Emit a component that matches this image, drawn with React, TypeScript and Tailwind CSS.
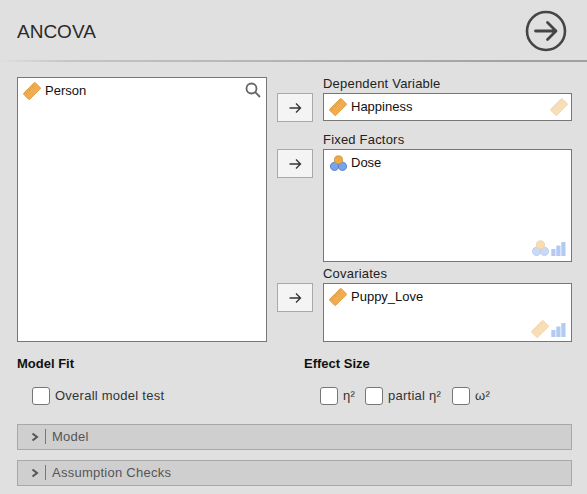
import React from "react";

function Ruler({ faded = false }: { faded?: boolean }) {
  return (
    <svg width="18" height="18" viewBox="0 0 18 18" className={faded ? "opacity-40" : ""}>
      <g transform="rotate(-45 9 9)">
        <rect x="0.800" y="4.700" width="16.400" height="8.600" rx="0.6" fill="#f0ad50" stroke="#dc9a3c" strokeWidth="0.8" />
        <path d="M3.200 5v2.700M5.500 5v1.600M7.800 5v2.700M10.100 5v1.600M12.400 5v2.700M14.700 5v1.600" stroke="#c78a34" strokeWidth="0.6" fill="none" />
      </g>
    </svg>
  );
}

function Nominal({ faded = false }: { faded?: boolean }) {
  return (
    <svg width="17" height="17" viewBox="0 0 18 18" className={faded ? "opacity-40" : ""}>
      <circle cx="4.800" cy="12" r="4.400" fill="#79a3ea" stroke="#3f6fca" strokeWidth="0.8" />
      <circle cx="13.200" cy="12" r="4.400" fill="#79a3ea" stroke="#3f6fca" strokeWidth="0.8" />
      <circle cx="9" cy="5.200" r="4.300" fill="#efa945" stroke="#c98a2e" strokeWidth="0.8" />
    </svg>
  );
}

function Bars() {
  return (
    <svg width="15" height="15" viewBox="0 0 15 15">
      <rect x="0.300" y="8" width="4.200" height="7" fill="#b3cbf2" />
      <rect x="5.300" y="4.500" width="4.200" height="10.500" fill="#b3cbf2" />
      <rect x="10.300" y="1" width="4.200" height="14" fill="#b3cbf2" />
    </svg>
  );
}

function ArrowButton({ className }: { className: string }) {
  return (
    <button className={`flex h-[29px] w-[36px] items-center justify-center border border-[#a9a9a9] bg-[#f4f4f4] ${className}`}>
      <svg width="14" height="12" viewBox="0 0 14 12" fill="none" stroke="#333333" strokeWidth="1.3">
        <path d="M1.500 6h11M8 1.500 12.500 6 8 10.500" />
      </svg>
    </button>
  );
}

function Item({ icon, label }: { icon: React.ReactNode; label: string }) {
  return (
    <div className="flex h-[18px] items-center gap-[4px] text-[13px] leading-none text-[#111111]">
      <span className="flex w-[18px] items-center justify-center">{icon}</span>
      <span className="-translate-y-px">{label}</span>
    </div>
  );
}

function Check({ label, className = "" }: { label: string; className?: string }) {
  return (
    <label className={`flex items-center gap-[5px] text-[13px] tracking-[0.25px] text-[#333333] ${className}`}>
      <span className="h-[18px] w-[18px] rounded-[3px] border border-[#777777] bg-white" />
      <span>{label}</span>
    </label>
  );
}

function Section({ label }: { label: string }) {
  return (
    <div className="flex h-[26px] items-center border border-[#a8a8a8] bg-[#cfcfcf] text-[13px] tracking-[0.25px] text-[#555555]">
      <svg width="10" height="10" viewBox="0 0 10 10" fill="none" stroke="#555555" strokeWidth="2" className="ml-[12px]">
        <path d="M2.500 1.500 7 5 2.500 8.500" />
      </svg>
      <span className="ml-[5px] h-[15px] w-px bg-[#777777]" />
      <span className="ml-[6px]">{label}</span>
    </div>
  );
}

export default function App() {
  return (
    <div className="h-[494px] w-[587px] overflow-hidden bg-[#e0e0e0] font-['Liberation_Sans',sans-serif]">
      <header className="flex h-[62px] items-start justify-between border-b-2 pl-[17px] pr-[20px] [border-image:linear-gradient(to_right,#e0e0e0,#c4c4c4_12%,#a0a0a0_90%)_1]">
        <h1 className="mt-[21px] text-[19px] leading-[22px] text-[#2a2a2a]">ANCOVA</h1>
        <svg width="42" height="42" viewBox="0 0 42 42" fill="none" stroke="#454545" className="mt-[10px]">
          <circle cx="21" cy="21" r="19" strokeWidth="2.600" />
          <path d="M10.500 21h20M22.500 12.500 31 21l-8.500 8.500" strokeWidth="2.800" strokeLinecap="round" strokeLinejoin="round" />
        </svg>
      </header>

      <main className="flex pl-[17px] pr-[15px] pt-[15px]">
        <div className="relative h-[265px] w-[250px] border border-[#777777] bg-white pl-[5px] pt-[4px]">
          <Item icon={<Ruler />} label="Person" />
          <svg width="16" height="16" viewBox="0 0 16 16" fill="none" stroke="#666666" strokeWidth="1.800" className="absolute right-[5px] top-[4px]">
            <circle cx="6.500" cy="6.500" r="5" />
            <path d="m10.200 10.200 4.800 4.800" />
          </svg>
        </div>

        <div className="ml-[10px] flex w-[36px] flex-col">
          <ArrowButton className="mt-[16px]" />
          <ArrowButton className="mt-[27px]" />
          <ArrowButton className="mt-[105px]" />
        </div>

        <div className="ml-[10px] flex w-[249px] flex-col">
          <div className="h-[16px] -translate-y-px text-[13px] leading-[15px] tracking-[0.2px] text-[#222222]">Dependent Variable</div>
          <div className="flex h-[28px] items-center justify-between border border-[#777777] bg-white pl-[5px] pr-[3px]">
            <Item icon={<Ruler />} label="Happiness" />
            <Ruler faded />
          </div>
          <div className="mt-[12px] h-[16px] -translate-y-px text-[13px] leading-[15px] tracking-[0.2px] text-[#222222]">Fixed Factors</div>
          <div className="flex h-[113px] flex-col justify-between border border-[#777777] bg-white pb-[4px] pl-[5px] pr-[5px] pt-[4px]">
            <Item icon={<Nominal />} label="Dose" />
            <div className="flex items-center justify-end gap-[2px]">
              <Nominal faded />
              <Bars />
            </div>
          </div>
          <div className="mt-[5px] h-[16px] -translate-y-px text-[13px] leading-[15px] tracking-[0.2px] text-[#222222]">Covariates</div>
          <div className="flex h-[59px] flex-col justify-between border border-[#777777] bg-white pb-[3px] pl-[5px] pr-[5px] pt-[4px]">
            <Item icon={<Ruler />} label="Puppy_Love" />
            <div className="flex items-center justify-end gap-[2px]">
              <Ruler faded />
              <Bars />
            </div>
          </div>
        </div>
      </main>

      <section className="flex pl-[17px] pt-[14px]">
        <div className="w-[287px]">
          <h2 className="text-[13px] font-bold leading-[15px] text-[#111111]">Model Fit</h2>
          <Check label="Overall model test" className="ml-[15px] mt-[15px]" />
        </div>
        <div>
          <h2 className="text-[13px] font-bold leading-[15px] text-[#111111]">Effect Size</h2>
          <div className="ml-[16px] mt-[15px] flex">
            <Check label="η²" className="w-[45px]" />
            <Check label="partial η²" className="w-[87px]" />
            <Check label="ω²" />
          </div>
        </div>
      </section>

      <div className="flex flex-col gap-[10px] pl-[17px] pr-[15px] pt-[18px]">
        <Section label="Model" />
        <Section label="Assumption Checks" />
      </div>
    </div>
  );
}
